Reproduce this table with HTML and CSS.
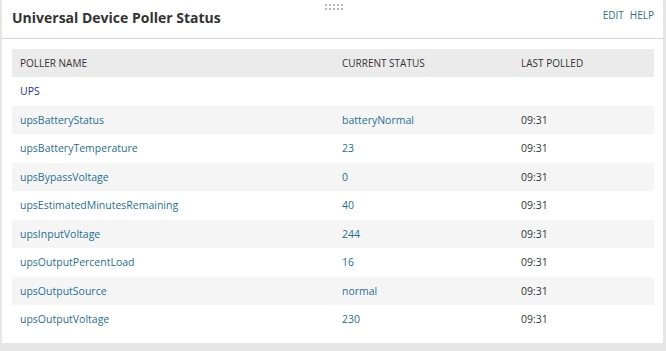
FILE: index.html
```html
<!DOCTYPE html>
<html>
<head>
<meta charset="utf-8">
<link rel="stylesheet" href="styles.css">
</head>
<body>
<div class="panel">
  <div class="drag"><span></span><span></span><span></span><span></span><span></span><span></span><span></span><span></span><span></span><span></span></div>
  <div class="head">
    <h1 class="title">Universal Device Poller Status</h1>
    <div class="actions"><a>EDIT</a><a>HELP</a></div>
  </div>
  <div class="body">
    <table class="grid">
      <thead>
        <tr><th class="c1">POLLER NAME</th><th class="c2">CURRENT STATUS</th><th class="c3">LAST POLLED</th></tr>
      </thead>
      <tbody>
        <tr class="group"><td colspan="3"><a class="grp">UPS</a></td></tr>
        <tr class="alt"><td><a>upsBatteryStatus</a></td><td><a>batteryNormal</a></td><td>09:31</td></tr>
        <tr><td><a>upsBatteryTemperature</a></td><td><a>23</a></td><td>09:31</td></tr>
        <tr class="alt"><td><a>upsBypassVoltage</a></td><td><a>0</a></td><td>09:31</td></tr>
        <tr><td><a>upsEstimatedMinutesRemaining</a></td><td><a>40</a></td><td>09:31</td></tr>
        <tr class="alt"><td><a>upsInputVoltage</a></td><td><a>244</a></td><td>09:31</td></tr>
        <tr><td><a>upsOutputPercentLoad</a></td><td><a>16</a></td><td>09:31</td></tr>
        <tr class="alt"><td><a>upsOutputSource</a></td><td><a>normal</a></td><td>09:31</td></tr>
        <tr><td><a>upsOutputVoltage</a></td><td><a>230</a></td><td>09:31</td></tr>
      </tbody>
    </table>
  </div>
</div>
</body>
</html>
```
FILE: styles.css
```css
html, body {
  margin: 0;
  padding: 0;
}
body {
  background: #e6e6e6;
  font-family: "Open Sans", "Liberation Sans", sans-serif;
  color: #333;
  width: 666px;
  height: 351px;
  overflow: hidden;
}
.panel {
  position: relative;
  margin-left: 2px;
  width: 661px;
  height: 343px;
  background: #fff;
  box-sizing: border-box;
}
.drag {
  position: absolute;
  left: 323px;
  top: 4px;
  width: 18px;
  display: grid;
  grid-template-columns: repeat(5, 2px);
  column-gap: 2px;
  row-gap: 2px;
}
.drag span {
  width: 2px;
  height: 2px;
  background: #b8b8b8;
}
.head {
  height: 38px;
  border-bottom: 1px solid #d6d6d6;
  display: flex;
  justify-content: space-between;
  align-items: flex-start;
  padding: 0 9px 0 10px;
}
.title {
  margin: 8px 0 0 0;
  font-size: 14px;
  font-weight: 700;
  color: #333;
  line-height: 20px;
}
.actions {
  margin-top: 8px;
  display: flex;
  gap: 6px;
  font-size: 10px;
  line-height: 14px;
}
.actions a {
  color: #2b6f8f;
}
.body {
  padding: 10px 9px 0 10px;
}
.grid {
  width: 100%;
  border-collapse: collapse;
  font-size: 10.5px;
}
.grid th {
  background: #ebebeb;
  font-weight: 400;
  font-size: 10px;
  text-align: left;
  height: 28px;
  padding: 0;
  color: #333;
}
.grid td {
  height: 28.5px;
  padding: 0;
  color: #333;
}
.grid th.c1 { padding-left: 8px; width: 322px; }
.grid th.c2 { width: 179px; }
.grid td:first-child { padding-left: 8px; }
.grid tr.alt td { background: #f5f5f5; }
.grid a {
  color: #1f6f97;
}
.grid a.grp {
  color: #1f2ea0;
}
```
